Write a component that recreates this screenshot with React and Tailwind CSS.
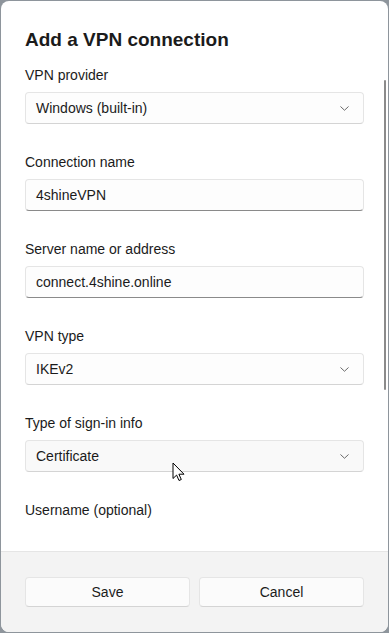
import React from 'react';

const font = { fontFamily: '"Liberation Sans", Arial, sans-serif' };

function Chevron() {
  return (
    <svg width="9" height="5" viewBox="0 0 9 5" fill="none" className="shrink-0">
      <path d="M0.75 0.75l3.75 3.5 3.75-3.5" stroke="#6a6a6a" strokeWidth="1" strokeLinecap="round" strokeLinejoin="round" />
    </svg>
  );
}

function Select({ value, hover }) {
  return (
    <div
      className={`h-8 flex items-center justify-between pl-[10px] pr-[14px] rounded-[4px] border border-[#e5e5e5] border-b-[#d4d4d4] ${
        hover ? 'bg-[#f9f9f9]' : 'bg-[#fdfdfd]'
      }`}
    >
      <span className="text-[14px] leading-5 text-[#1b1b1b]">{value}</span>
      <Chevron />
    </div>
  );
}

function TextBox({ value }) {
  return (
    <div className="h-8 flex items-center pl-[10px] rounded-[4px] border border-[#e5e5e5] border-b-[#8a8a8a] bg-[#fdfdfd]">
      <span className="text-[14px] leading-5 text-[#1b1b1b]">{value}</span>
    </div>
  );
}

function Field({ label, children }) {
  return (
    <div className="mb-[28px]">
      <div className="text-[14px] leading-5 text-[#1b1b1b] mb-[7px]">{label}</div>
      {children}
    </div>
  );
}

export default function App() {
  return (
    <div className="h-[633px] w-[389px] bg-[#8e959c] p-px" style={font}>
      <div className="relative h-full bg-white rounded-lg overflow-hidden flex flex-col">
        {/* Scrollable content */}
        <div className="h-[550px] overflow-hidden px-6 pt-[25px]">
          <h1 className="text-[19px] leading-7 font-bold text-[#1b1b1b] mb-[11px]">Add a VPN connection</h1>
          <Field label="VPN provider">
            <Select value="Windows (built-in)" />
          </Field>
          <Field label="Connection name">
            <TextBox value="4shineVPN" />
          </Field>
          <Field label="Server name or address">
            <TextBox value="connect.4shine.online" />
          </Field>
          <Field label="VPN type">
            <Select value="IKEv2" />
          </Field>
          <Field label="Type of sign-in info">
            <Select value="Certificate" hover />
          </Field>
          <div className="text-[14px] leading-5 text-[#1b1b1b]">Username (optional)</div>
        </div>

        {/* Scrollbar thumb */}
        <div className="absolute left-[383px] top-[79px] w-[2px] h-[310px] rounded-full bg-[#8b8b8b]" />

        {/* Footer */}
        <div className="flex-1 bg-[#f3f3f3] border-t border-[#e5e5e5] px-6 pt-[25px] flex gap-[9px]">
          <button className="flex-1 h-[30px] rounded-[4px] border border-[#e5e5e5] border-b-[#d4d4d4] bg-[#fbfbfb] text-[14px] text-[#1b1b1b]">
            Save
          </button>
          <button className="flex-1 h-[30px] rounded-[4px] border border-[#e5e5e5] border-b-[#d4d4d4] bg-[#fbfbfb] text-[14px] text-[#1b1b1b]">
            Cancel
          </button>
        </div>

        {/* Mouse pointer */}
        <svg className="absolute left-[171px] top-[461px]" width="13" height="20" viewBox="0 0 13 20">
          <path d="M1 1v15.5l3.6-3.4 2.4 5.4 2.3-1-2.4-5.3h5.1z" fill="#fff" stroke="#000" strokeWidth="1" strokeLinejoin="round" />
        </svg>
      </div>
    </div>
  );
}
